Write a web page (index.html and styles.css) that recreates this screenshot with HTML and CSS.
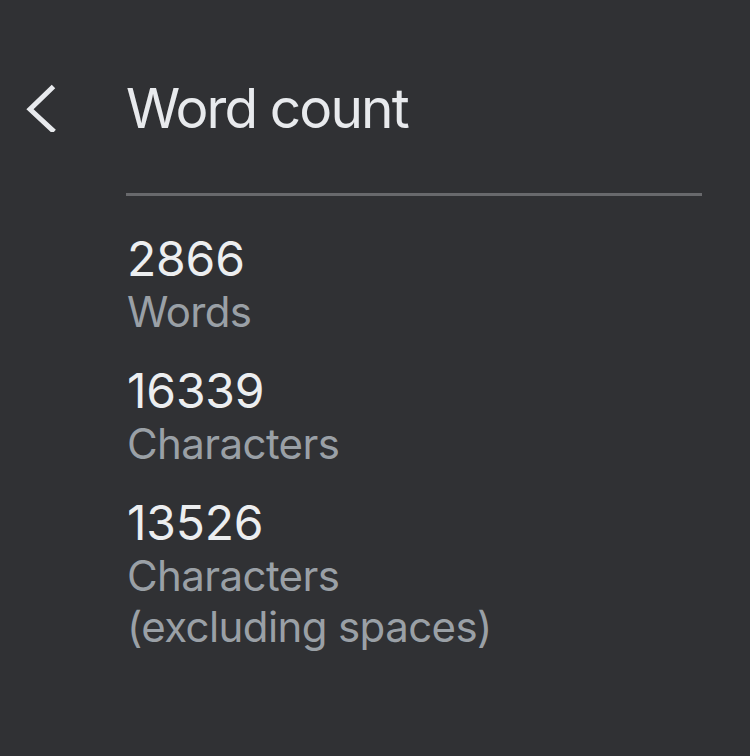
FILE: index.html
```html
<!DOCTYPE html>
<html lang="en">
<head>
<meta charset="utf-8">
<title>Word count</title>
<link rel="stylesheet" href="styles.css">
</head>
<body>
<div class="page">
  <header class="header">
    <button class="back" aria-label="Back">
      <svg width="40" height="56" viewBox="0 0 40 56" aria-hidden="true">
        <path d="M35.7 12.3 L14 33.3 L36.3 54" fill="none" stroke="#e8eaed" stroke-width="5" stroke-linecap="square" stroke-linejoin="miter"/>
      </svg>
    </button>
    <h1 class="title">Word count</h1>
  </header>
  <main class="content">
    <hr class="divider">
    <ul class="stats">
      <li class="stat">
        <div class="value">2866</div>
        <div class="label">Words</div>
      </li>
      <li class="stat">
        <div class="value">16339</div>
        <div class="label">Characters</div>
      </li>
      <li class="stat">
        <div class="value">13526</div>
        <div class="label">Characters<br>(excluding spaces)</div>
      </li>
    </ul>
  </main>
</div>
</body>
</html>
```

FILE: styles.css
```css
html, body {
  margin: 0;
  padding: 0;
  background: #303134;
}
body {
  font-family: Inter, "Noto Sans", sans-serif;
  color: #e8eaed;
  width: 750px;
  height: 756px;
  overflow: hidden;
}
.page {
  display: flex;
  flex-direction: column;
}
.header {
  display: flex;
  align-items: flex-start;
  padding-top: 76px;
}
.back {
  width: 126px;
  height: 64px;
  padding: 0 0 0 16px;
  margin: 0;
  border: 0;
  background: none;
  display: flex;
  align-items: flex-start;
  cursor: pointer;
}
.back svg {
  display: block;
}
.title {
  margin: 0;
  font-size: 55px;
  line-height: 64px;
  font-weight: 400;
  letter-spacing: -1.9px;
  color: #e8eaed;
}
.content {
  margin-left: 126px;
  width: 576px;
  display: flex;
  flex-direction: column;
}
.divider {
  margin: 53px 0 0 0;
  border: 0;
  height: 3px;
  background: #68696c;
}
.stats {
  list-style: none;
  margin: 35px 0 0 0;
  padding: 0 0 0 1px;
  display: flex;
  flex-direction: column;
  gap: 26px;
}
.value {
  font-size: 48px;
  line-height: 55px;
  letter-spacing: -0.2px;
  color: #eceef0;
}
.label {
  font-size: 42px;
  line-height: 51px;
  letter-spacing: -0.6px;
  color: #9aa0a6;
}
```
